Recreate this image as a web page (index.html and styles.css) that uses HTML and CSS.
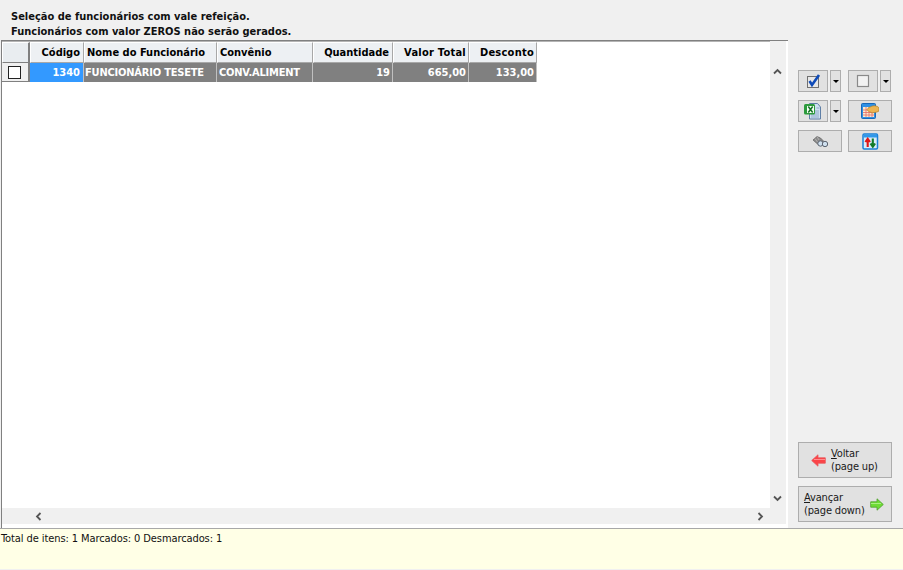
FILE: index.html
```html
<!DOCTYPE html>
<html lang="pt">
<head>
<meta charset="utf-8">
<title>Seleção de funcionários</title>
<link rel="stylesheet" href="styles.css">
</head>
<body>
<div class="app">
  <div class="main">
    <div class="left">
      <div class="intro">
        <div>Seleção de funcionários com vale refeição.</div>
        <div>Funcionários com valor ZEROS não serão gerados.</div>
      </div>
      <div class="gridframe">
        <div class="gridbody">
          <div class="sheet">
            <div class="cols head">
              <div class="hc corner"></div>
              <div class="hc r code">Código</div>
              <div class="hc">Nome do Funcionário</div>
              <div class="hc">Convênio</div>
              <div class="hc r qty">Quantidade</div>
              <div class="hc r wider">Valor Total</div>
              <div class="hc r wider">Desconto</div>
            </div>
            <div class="cols row">
              <div class="cc"><span class="check"></span></div>
              <div class="dc r sel">1340</div>
              <div class="dc txt">FUNCIONÁRIO TESETE</div>
              <div class="dc txt">CONV.ALIMENT</div>
              <div class="dc r">19</div>
              <div class="dc r">665,00</div>
              <div class="dc r">133,00</div>
            </div>
          </div>
          <div class="hscroll">
            <svg class="arrow" width="9" height="9" viewBox="0 0 9 9"><path d="M6.500 1 3 4.500 6.500 8" fill="none" stroke="#555" stroke-width="1.800"/></svg>
            <svg class="arrow" width="9" height="9" viewBox="0 0 9 9"><path d="M2.500 1 6 4.500 2.500 8" fill="none" stroke="#555" stroke-width="1.800"/></svg>
          </div>
        </div>
        <div class="vscroll">
          <svg class="arrow" width="9" height="9" viewBox="0 0 9 9"><path d="M1 6.500 4.500 3 8 6.500" fill="none" stroke="#555" stroke-width="1.800"/></svg>
          <svg class="arrow" width="9" height="9" viewBox="0 0 9 9"><path d="M1 2.500 4.500 6 8 2.500" fill="none" stroke="#555" stroke-width="1.800"/></svg>
        </div>
      </div>
    </div>
    <div class="side">
      <div class="tools">
        <div class="toolrow">
          <button class="btn tool"><svg width="16" height="16" viewBox="0 0 16 16"><rect x="2.500" y="3.500" width="11" height="11" fill="#e8e8e8" stroke="#707070"/><path d="M4.500 8 7 12 14 2" fill="none" stroke="#0f4bb8" stroke-width="2.600"/></svg></button>
          <button class="btn drop"><span class="caret"></span></button>
          <button class="btn tool gap"><svg width="14" height="14" viewBox="0 0 14 14"><rect x="1.500" y="1.500" width="11" height="11" fill="#f2f2f2" stroke="#8a8a8a" stroke-width="1.200"/></svg></button>
          <button class="btn drop"><span class="caret"></span></button>
        </div>
        <div class="toolrow">
          <button class="btn tool"><svg width="18" height="18" viewBox="0 0 18 18"><path d="M5.500 1.500h8l3 3.500v12h-11z" fill="#cfe0f2" stroke="#5f7fa6"/><path d="M12.500 6h3M7 9h8M7 11h8M7 13h8M7 15h8" stroke="#8eaac8"/><rect x="0" y="2" width="11" height="10.500" rx="1.500" fill="#2c9a3c"/><rect x="3" y="4" width="7" height="7" fill="#f4fff4"/><path d="M4.300 4.500 8.700 10.500M8.700 4.500 4.300 10.500" stroke="#167426" stroke-width="1.500"/></svg></button>
          <button class="btn drop"><span class="caret"></span></button>
          <button class="btn wide gap"><svg width="18" height="17" viewBox="0 0 18 17"><rect x=".5" y=".5" width="14" height="15" rx="1" fill="#2f90e4" stroke="#1868b8"/><rect x="2" y="4" width="11" height="10" fill="#f8ead0"/><path d="M2 7h11M2 9.500h11M2 12h11M5 4v10M8 4v10M11 4v10" stroke="#e46a62" stroke-width=".8"/><path d="M6 6.500c1-1.500 2-2 3.500-2.700C11 3 13 2.500 15 3c1.500.4 2.500 1 3 2v3c-1.500 1-3.500 1.500-5 1.500-1.500.7-3 .3-3.800-.5C8 9 7 8 6 6.500z" fill="#ecb452" stroke="#a87820" stroke-width=".6"/></svg></button>
        </div>
        <div class="toolrow">
          <button class="btn wide"><svg width="15" height="13" viewBox="0 0 15 13"><path d="M0 5 4 1.500l3.500 1.500 3 3-3 3.500-3-.5z" fill="#8a8a8a" stroke="#5e5e5e" stroke-width=".7"/><path d="M4 1.500 6 5M2 3.500 4.500 7" stroke="#bbb" stroke-width=".8"/><circle cx="7.500" cy="8.500" r="2.700" fill="#cfe0ef" stroke="#5c6470"/><circle cx="12" cy="9" r="2.700" fill="#cfe0ef" stroke="#5c6470"/></svg></button>
          <button class="btn wide gap"><svg width="17" height="17" viewBox="0 0 17 17"><rect x="1" y="1" width="14.500" height="15" rx="1.200" fill="#d9ecfb" stroke="#1a80d8" stroke-width="1.500"/><rect x="1.500" y="1.500" width="13.500" height="3" fill="#2f98ea"/><path d="M5.700 14V6.500M3.400 9l2.300-3.200L8 9" fill="none" stroke="#e01616" stroke-width="2.100"/><path d="M10.800 5.500V13M8.500 10.500l2.300 3.200 2.300-3.200" fill="none" stroke="#127a28" stroke-width="2.100"/></svg></button>
        </div>
      </div>
      <div class="navs">
        <button class="btn nav back">
          <svg width="15" height="13" viewBox="0 0 15 13"><path d="M.7 6.500 7 .8v3h7.300v5.400H7v3z" fill="#fb4448" stroke="#e8585c" stroke-width=".8"/><path d="M3 5.500h11" stroke="#ff8c8e" stroke-width="1"/></svg>
          <span class="navtext"><span><u>V</u>oltar</span><span>(page up)</span></span>
        </button>
        <button class="btn nav next">
          <span class="navtext"><span><u>A</u>vançar</span><span>(page down)</span></span>
          <svg width="14" height="13" viewBox="0 0 14 13"><path d="M13.300 6.500 7 .8v3H.7v5.400H7v3z" fill="#6edc34" stroke="#4e9e2c" stroke-width=".8"/><path d="M1 5.500h10" stroke="#a8f080" stroke-width="1"/></svg>
        </button>
      </div>
    </div>
  </div>
  <div class="status">Total de itens: 1 Marcados: 0 Desmarcados: 1</div>
</div>
</body>
</html>
```
FILE: styles.css
```css
* { box-sizing: border-box; }
html, body { margin: 0; padding: 0; }
body {
  width: 903px;
  height: 570px;
  overflow: hidden;
  background: #f0f0f0;
  font-family: "DejaVu Sans Condensed", "DejaVu Sans", sans-serif;
  font-size: 11px;
  color: #000;
}
.app { display: flex; flex-direction: column; height: 570px; }
.main { display: flex; height: 528px; }
.left { width: 788px; display: flex; flex-direction: column; }
.intro {
  height: 40px;
  padding: 9px 0 0 11px;
  font-weight: bold;
  line-height: 15px;
  color: #111;
}
.gridframe {
  flex: 1;
  display: flex;
  background: #fff;
  border-top: 1px solid #808080;
  border-left: 1px solid #808080;
  margin-left: 1px;
  padding: 0 2px 4px 0;
  min-height: 0;
}
.gridbody { flex: 1; display: flex; flex-direction: column; min-width: 0; }
.sheet { flex: 1; border-top: 1px solid #b4b4b4; }
.cols {
  display: grid;
  grid-template-columns: 28px 54px 133px 96px 80px 76px 68px;
  width: 535px;
}
.head { height: 21px; }
.hc {
  background: #edf0f3;
  border-top: 1px solid #fff;
  border-left: 1px solid #fff;
  border-right: 1px solid #a8a8a8;
  border-bottom: 1px solid #a8a8a8;
  font-weight: bold;
  line-height: 19px;
  padding: 0 2px;
  white-space: nowrap;
  overflow: hidden;
}
.hc.corner {
  background: #e9edf0;
  border-right: 2px solid #808080;
  border-bottom: 1px solid #808080;
}
.hc.code { padding-right: 3px; }
.hc.qty { padding-right: 3px; }
.hc.wider { letter-spacing: 0.25px; }
.r { text-align: right; }
.row { height: 19px; }
.cc {
  background: #f0f0f0;
  display: flex;
  align-items: center;
  justify-content: center;
  border-right: 2px solid #808080;
  border-bottom: 1px solid #808080;
  padding-right: 1px;
}
.check {
  width: 13px;
  height: 13px;
  border: 1px solid #222;
  background: #fff;
}
.dc {
  background: #808080;
  color: #fff;
  font-weight: bold;
  line-height: 19px;
  padding: 0 2px;
  border-right: 1px solid #c0c0c0;
  white-space: nowrap;
  overflow: hidden;
}
.dc.txt { letter-spacing: -0.2px; padding-left: 1px; }
.dc.txt + .dc.txt { padding-left: 2px; }
.dc.sel { background: #3399ff; padding-right: 3px; }
.hscroll {
  height: 16px;
  background: #f0f0f0;
  display: flex;
  align-items: center;
  justify-content: space-between;
  padding: 0 5px 0 32px;
}
.vscroll {
  width: 16px;
  background: #f0f0f0;
  display: flex;
  flex-direction: column;
  align-items: center;
  justify-content: space-between;
  padding: 26px 1px 21px 0;
}
.arrow { display: block; }
.side {
  flex: 1;
  display: flex;
  flex-direction: column;
  justify-content: space-between;
  padding: 70px 11px 6px 10px;
}
.tools { display: flex; flex-direction: column; gap: 8px; }
.toolrow { display: flex; gap: 2px; height: 22px; }
.btn {
  margin: 0;
  padding: 0;
  font: inherit;
  color: #000;
  background: #e1e1e1;
  border: 1px solid #adadad;
  display: flex;
  align-items: center;
  justify-content: center;
}
.tool { width: 30px; height: 22px; }
.drop { width: 11px; height: 22px; }
.wide { width: 44px; height: 22px; }
.gap { margin-left: 5px; }
.toolrow > .wide:first-child + .gap { margin-left: 4px; }
.caret {
  width: 0;
  height: 0;
  border-left: 3.500px solid transparent;
  border-right: 3.500px solid transparent;
  border-top: 3px solid #000;
}
.navs { display: flex; flex-direction: column; gap: 8px; }
.nav { width: 94px; height: 36px; justify-content: flex-start; font-weight: normal; color: #1a1a1a; }
.back { padding-left: 12px; gap: 5px; }
.next { padding-left: 5px; gap: 5px; }
.navtext { display: flex; flex-direction: column; line-height: 13px; letter-spacing: -0.15px; text-align: left; }
.status {
  height: 42px;
  background: #ffffe6;
  border-top: 1px solid #a8a8a8;
  border-bottom: 1px solid #f0f0f0;
  padding: 3px 0 0 1px;
  line-height: 14px;
  letter-spacing: -0.09px;
  color: #111;
}
```
